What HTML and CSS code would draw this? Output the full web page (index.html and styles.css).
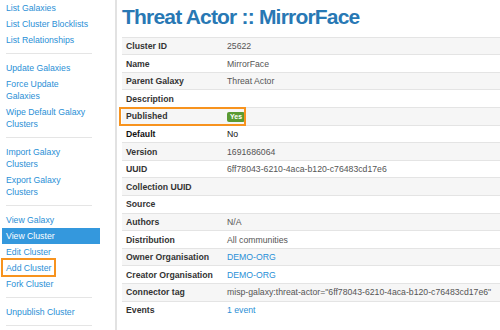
FILE: index.html
```html
<!DOCTYPE html>
<html lang="en">
<head>
    <meta charset="UTF-8">
    <meta name="viewport" content="width=device-width, initial-scale=1.0">
    <title>Threat Actor :: MirrorFace</title>
    <link rel="stylesheet" href="styles.css">
</head>
<body>
    <div class="page">
        <nav class="sidebar">
            <ul class="side_list">
                <li><a href="#">List Galaxies</a></li>
                <li><a href="#">List Cluster Blocklists</a></li>
                <li><a href="#">List Relationships</a></li>
                <li class="divider"></li>
                <li><a href="#">Update Galaxies</a></li>
                <li><a href="#">Force Update Galaxies</a></li>
                <li><a href="#">Wipe Default Galaxy Clusters</a></li>
                <li class="divider"></li>
                <li><a href="#">Import Galaxy Clusters</a></li>
                <li><a href="#">Export Galaxy Clusters</a></li>
                <li class="divider"></li>
                <li><a href="#">View Galaxy</a></li>
                <li class="active"><a href="#">View Cluster</a></li>
                <li><a href="#">Edit Cluster</a></li>
                <li><a href="#">Add Cluster</a></li>
                <li><a href="#">Fork Cluster</a></li>
                <li class="divider"></li>
                <li><a href="#">Unpublish Cluster</a></li>
                <li class="divider"></li>
            </ul>
        </nav>
        <main class="content">
            <h2 class="cluster_title">Threat Actor :: MirrorFace</h2>
            <table class="cluster_table">
                <tr><td>Cluster ID</td><td>25622</td></tr>
                <tr><td>Name</td><td>MirrorFace</td></tr>
                <tr><td>Parent Galaxy</td><td>Threat Actor</td></tr>
                <tr><td>Description</td><td></td></tr>
                <tr><td>Published</td><td><span class="label_yes">Yes</span></td></tr>
                <tr class="row_dark"><td>Default</td><td>No</td></tr>
                <tr><td>Version</td><td>1691686064</td></tr>
                <tr><td>UUID</td><td>6ff78043-6210-4aca-b120-c76483cd17e6</td></tr>
                <tr><td>Collection UUID</td><td></td></tr>
                <tr><td>Source</td><td></td></tr>
                <tr><td>Authors</td><td>N/A</td></tr>
                <tr><td>Distribution</td><td>All communities</td></tr>
                <tr><td>Owner Organisation</td><td><a href="#">DEMO-ORG</a></td></tr>
                <tr><td>Creator Organisation</td><td><a href="#">DEMO-ORG</a></td></tr>
                <tr><td>Connector tag</td><td>misp-galaxy:threat-actor="6ff78043-6210-4aca-b120-c76483cd17e6"</td></tr>
                <tr><td>Events</td><td><a href="#">1 event</a></td></tr>
            </table>
        </main>
    </div>
    <div class="highlight highlight_published"></div>
    <div class="highlight highlight_add"></div>
</body>
</html>
```

FILE: styles.css
```css
* {
    margin: 0;
    padding: 0;
    box-sizing: border-box;
}
body {
    position: relative;
    width: 500px;
    height: 330px;
    overflow: hidden;
    background-color: #fff;
    font-family: 'Liberation Sans', Arial, sans-serif;
    font-size: 8.7px;
    color: #555;
}
a {
    color: #2a8fd6;
    text-decoration: none;
}
.page {
    display: flex;
    height: 100%;
}
.sidebar {
    width: 117px;
    flex-shrink: 0;
    border-right: 2px solid #e2e2e2;
}
.side_list {
    list-style: none;
    margin-left: 2px;
    width: 98px;
}
.side_list li a {
    display: block;
    padding: 2px 8px 2px 4px;
    line-height: 12px;
}
.side_list li.active a {
    background-color: #3498dd;
    color: #fff;
}
.divider {
    height: 1px;
    margin: 5px 8px 6px 4px;
    background-color: #e5e5e5;
}
.content {
    flex: 1;
    padding-left: 5px;
}
.cluster_title {
    margin-top: 5px;
    margin-bottom: 7.7px;
    font-size: 21px;
    line-height: 24px;
    letter-spacing: -0.8px;
    font-weight: bold;
    color: #2878b4;
}
.cluster_table {
    width: 100%;
    border-collapse: collapse;
}
.cluster_table td {
    padding: 2.3px 4px;
    line-height: 12px;
    border-top: 1px solid #e4e4e4;
    vertical-align: middle;
    white-space: nowrap;
}
.cluster_table tr:nth-child(odd) td {
    background-color: #f6f6f6;
}
.cluster_table td:first-child {
    width: 101px;
    font-weight: bold;
    color: #333;
}
.cluster_table .row_dark td {
    color: #111;
}
.label_yes {
    display: inline-block;
    padding: 1px 3px;
    line-height: 8px;
    font-size: 7px;
    font-weight: bold;
    color: #fff;
    background-color: #5a9a32;
    border-radius: 2px;
    vertical-align: middle;
}
.highlight {
    position: absolute;
    border: 2px solid #f7931e;
}
.highlight_published {
    left: 119px;
    top: 107px;
    width: 127px;
    height: 19px;
}
.highlight_add {
    left: 1px;
    top: 258px;
    width: 55px;
    height: 19px;
}
```
